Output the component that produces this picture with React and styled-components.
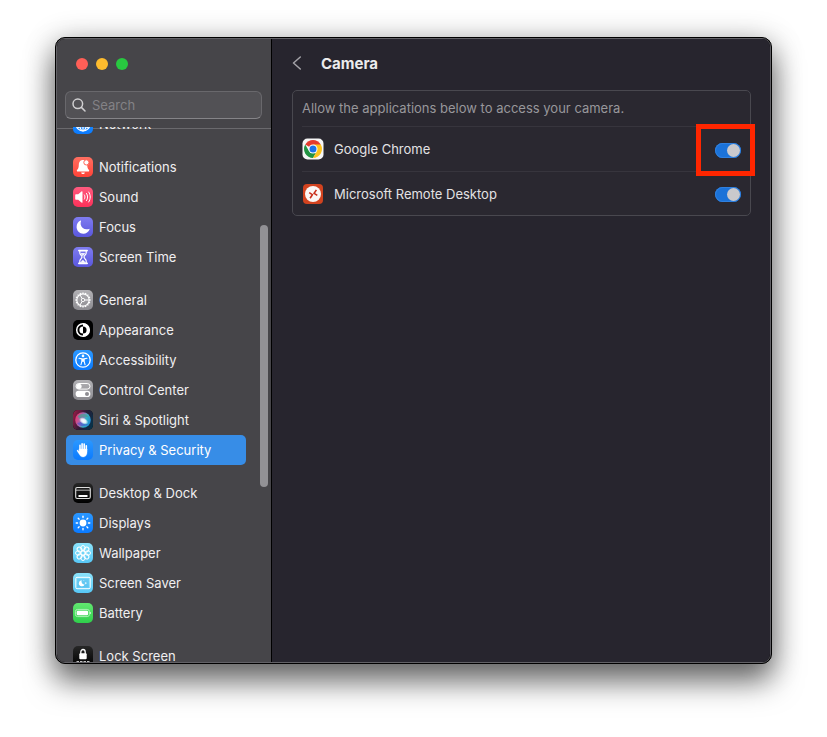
import { useLayoutEffect, useRef } from 'react';
import styled, { createGlobalStyle } from 'styled-components';

const GlobalStyle = createGlobalStyle`
  * {
    box-sizing: border-box;
  }
  body {
    margin: 0;
    background: #fff;
    font-family: Inter, "Liberation Sans", sans-serif;
    font-size: 13px;
  }
`;

const Desktop = styled.div`
  display: flex;
  height: 100vh;
  padding: 37px 55px 73px;
`;

const Window = styled.div`
  flex: 1;
  min-width: 0;
  display: flex;
  border: 1px solid #000;
  border-radius: 10px;
  background: #000;
  box-shadow: 0 18px 30px rgba(0, 0, 0, 0.5), 0 4px 30px rgba(0, 0, 0, 0.3);
`;

const Frame = styled.div`
  flex: 1;
  min-width: 0;
  display: flex;
  border: 1px solid #626166;
  border-radius: 9px;
  overflow: hidden;
`;

const Sidebar = styled.aside`
  width: 215px;
  flex: none;
  display: flex;
  flex-direction: column;
  background: #464549;
  border-right: 1px solid #000;
`;

const SidebarHeader = styled.div`
  padding: 19px 9px 9px 8px;
  border-bottom: 1px solid #6a696d;
`;

const TrafficLights = styled.div`
  display: flex;
  gap: 8px;
  padding-left: 11px;
  margin-bottom: 21px;
`;

const Light = styled.button`
  width: 12px;
  height: 12px;
  padding: 0;
  border: 0;
  border-radius: 50%;
  background: ${(props) => props.$color};
`;

const SearchBox = styled.label`
  display: flex;
  align-items: center;
  gap: 6px;
  height: 28px;
  padding: 0 6px;
  border: 1px solid #69686c;
  border-bottom-color: #858488;
  border-radius: 6px;
  background: #525155;

  svg {
    flex: none;
  }
`;

const SearchInput = styled.input`
  flex: 1;
  min-width: 0;
  padding: 0;
  border: 0;
  outline: 0;
  background: none;
  color: #e6e5e7;
  font: inherit;

  &::placeholder {
    color: #838286;
    opacity: 1;
  }
`;

/* rows slide over the header's hairline before they are clipped */
const ListArea = styled.div`
  position: relative;
  flex: 1;
  min-height: 0;
  margin-top: -2px;
`;

const NavList = styled.nav`
  height: 100%;
  padding: 0 25px 0 9px;
  overflow-y: auto;
  scrollbar-width: none;
`;

const NavGroup = styled.div`
  & + & {
    margin-top: 13px;
  }
`;

const NavItem = styled.a`
  display: flex;
  align-items: center;
  gap: 6px;
  height: 30px;
  padding-left: 7px;
  border-radius: 5px;
  color: ${(props) => (props.$active ? '#fff' : '#f0eff1')};
  background: ${(props) => (props.$active ? '#378de7' : 'none')};
  text-decoration: none;
  white-space: nowrap;
`;

const Tile = styled.span`
  display: block;
  flex: none;
  width: 20px;
  height: 20px;
  border-radius: 5px;
  overflow: hidden;
  background: ${(props) => props.$bg};

  svg {
    display: block;
  }
`;

const ScrollThumb = styled.div`
  position: absolute;
  top: calc(18% + 2px);
  right: 3px;
  width: 8px;
  height: 49%;
  border-radius: 4px;
  background: #929195;
`;

const Main = styled.main`
  flex: 1;
  min-width: 0;
  padding: 13px 19px 0 20px;
  background: #27252e;
`;

const TitleBar = styled.header`
  display: flex;
  align-items: center;
  gap: 19px;
  height: 22px;
  margin-bottom: 16px;
`;

const BackButton = styled.button`
  display: flex;
  padding: 0;
  border: 0;
  background: none;
`;

const Title = styled.h1`
  margin: 0;
  color: #ebebec;
  font-size: 15px;
  font-weight: 700;
`;

const Panel = styled.section`
  padding: 0 9px;
  border: 1px solid #49484f;
  border-radius: 5px;
  background: #2a2830;
`;

const Description = styled.p`
  display: flex;
  align-items: center;
  height: 35px;
  margin: 0;
  padding-bottom: 2px;
  color: #98979b;
`;

const AppRow = styled.div`
  display: flex;
  align-items: center;
  height: 45px;
  border-top: 1px solid #37353d;

  &:last-child {
    height: 44px;
  }
`;

const AppLabel = styled.label`
  flex: 1;
  display: flex;
  align-items: center;
  gap: 10px;
  color: #e3e2e4;
`;

const SwitchHolder = styled.span`
  position: relative;
  display: flex;
  margin-top: 2px;
`;

const Switch = styled.input`
  appearance: none;
  display: flex;
  align-items: center;
  width: 26px;
  height: 15px;
  margin: 0;
  padding: 1px;
  border-radius: 8px;
  background: #55545a;

  &::before {
    content: '';
    width: 13px;
    height: 13px;
    border-radius: 50%;
    background: #cac9cc;
  }

  &:checked {
    justify-content: flex-end;
    background: #1b72d8;
    box-shadow: inset 0 0 0 1px #2f80df;
  }
`;

const Highlight = styled.span`
  position: absolute;
  inset: -19px -14px -18px -19px;
  border: 5px solid #ff2600;
  pointer-events: none;
`;

const blue = 'linear-gradient(#2b98ff, #0a7aff)';
const red = 'linear-gradient(#ff6f61, #ff4338)';
const pink = 'linear-gradient(#ff5b80, #fb3159)';
const indigo = 'linear-gradient(#7f7cf0, #5a57dd)';
const gray = 'linear-gradient(#b2b1b5, #8c8b90)';
const black = 'linear-gradient(#272727, #000)';
const cyan = 'linear-gradient(#8be3fb, #57c6f5)';
const green = 'linear-gradient(#62e770, #2fcf4b)';

const Svg = ({ size = 20, children }) => (
  <svg width={size} height={size} viewBox="0 0 20 20" fill="none" aria-hidden="true">
    {children}
  </svg>
);

const petals = [0, 45, 90, 135, 180, 225, 270, 315];
const teeth = Array.from({ length: 16 }, (_, i) => i * 22.5);

const icons = {
  network: (
    <g stroke="#fff" strokeWidth="1.2">
      <circle cx="10" cy="10" r="7" />
      <ellipse cx="10" cy="10" rx="3.3" ry="7" />
      <path d="M3 10h14M10 3v14M4.4 6.2Q10 9 15.6 6.2M4.4 13.8Q10 11 15.6 13.8" />
    </g>
  ),
  bell: (
    <>
      <path d="M10 3.1C7 3.1 5.9 5.3 5.8 8c-.1 2.6-.6 3.6-1.6 4.8-.7.8-.4 1.8.6 1.8h10.4c1 0 1.3-1 .6-1.8-.9-1.1-1.5-2.2-1.6-4.8C14.1 5.3 13 3.1 10 3.1z" fill="#fff" />
      <path d="M8.2 15.5h3.600c-.1 1-.8 1.600-1.800 1.600s-1.700-.6-1.800-1.600z" fill="#fff" />
      <circle cx="13.4" cy="5.4" r="2.6" fill="#fff" stroke="#ff6458" strokeWidth="1" />
    </>
  ),
  sound: (
    <>
      <path d="M2.2 8c0-.4.3-.7.7-.7h2.300l3.300-2.900c.4-.4 1-.1 1 .4v10.400c0 .5-.6.8-1 .4l-3.300-2.900H2.900c-.4 0-.7-.3-.7-.7V8z" fill="#fff" />
      <path d="M11.4 7.9c.8 1.300.8 2.900 0 4.200M13.5 6.400c1.500 2.200 1.500 5 0 7.200M15.7 5c2.100 3.100 2.100 6.900 0 10" stroke="#fff" strokeWidth="1" strokeLinecap="round" />
    </>
  ),
  moon: (
    <path d="M7.6 3.500c.4-.1.700.2.500.6-.5 1.100-.6 2.300-.4 3.500.6 3 3.400 5 6.500 4.700.6-.1 1.200-.2 1.700-.4.400-.2.800.2.600.6-1 2.500-3.400 4.200-6.200 4.200-3.700 0-6.700-3-6.700-6.700 0-3 1.500-5.600 4-6.500z" fill="#fff" />
  ),
  hourglass: (
    <g stroke="#fff" strokeLinecap="round" strokeLinejoin="round">
      <path d="M5.8 3.600h8.400M5.8 16.400h8.400" strokeWidth="1.6" />
      <path d="M6.8 4v2c0 1.800 2.200 2.500 2.200 4s-2.200 2.200-2.200 4v2M13.2 4v2c0 1.800-2.200 2.500-2.200 4s2.200 2.200 2.200 4v2" strokeWidth="1.2" />
      <path d="M8.3 6.500h3.400L10 8.600zM7.8 15.600h4.400L10 13.300z" fill="#fff" strokeWidth=".7" />
    </g>
  ),
  gear: (
    <g stroke="#fff">
      <circle cx="10" cy="10" r="6.2" strokeWidth="1.2" />
      {teeth.map((a) => (
        <path key={a} d="M10 3.800V2.400" strokeWidth="1.3" transform={`rotate(${a} 10 10)`} />
      ))}
      <circle cx="10" cy="10" r="1.7" strokeWidth=".9" />
      <path d="M11.7 10h4.500M9.1 8.500L6.9 4.700M9.1 11.500l-2.200 3.800" strokeWidth="1" />
    </g>
  ),
  appearance: (
    <>
      <circle cx="10" cy="10" r="6.3" stroke="#fff" strokeWidth="1.5" />
      <path d="M10 6.400a3.600 3.600 0 000 7.200z" fill="#fff" />
      <path d="M10 3.300v3.100a3.600 3.600 0 010 7.200v3.100a6.700 6.700 0 000-13.400z" fill="#fff" />
    </>
  ),
  accessibility: (
    <>
      <circle cx="10" cy="10" r="7.2" stroke="#fff" strokeWidth="1.3" />
      <circle cx="10" cy="5.9" r="1.3" fill="#fff" />
      <path d="M6 8.300l2.900.6v2.200l-1 3.700M14 8.300l-2.900.6v2.200l1 3.700" stroke="#fff" strokeWidth="1.1" strokeLinecap="round" strokeLinejoin="round" />
      <path d="M8.8 8.500h2.400v3.200H8.8z" fill="#fff" />
    </>
  ),
  controls: (
    <>
      <rect x="3" y="3.5" width="14" height="5.6" rx="2.8" stroke="#fff" strokeWidth="1" />
      <circle cx="6" cy="6.3" r="2.6" fill="#fff" />
      <rect x="2.6" y="10.8" width="14.8" height="6.2" rx="3.1" fill="#fff" />
      <circle cx="14" cy="13.9" r="2" fill="#8e8d92" />
    </>
  ),
  siri: (
    <>
      <defs>
        <linearGradient id="siriBack" x1="0" y1="0.3" x2="1" y2=".7">
          <stop offset="0" stopColor="#8c1c45" />
          <stop offset=".5" stopColor="#2b1a35" />
          <stop offset="1" stopColor="#07334a" />
        </linearGradient>
        <linearGradient id="siriOrb" x1="0" y1="0.3" x2="1" y2=".7">
          <stop offset="0" stopColor="#f0346b" />
          <stop offset=".4" stopColor="#a26cb4" />
          <stop offset=".65" stopColor="#35b3c4" />
          <stop offset="1" stopColor="#1c86d8" />
        </linearGradient>
        <radialGradient id="siriGlow">
          <stop offset="0" stopColor="#fff" />
          <stop offset=".5" stopColor="#f2f8ff" stopOpacity=".9" />
          <stop offset="1" stopColor="#fff" stopOpacity="0" />
        </radialGradient>
      </defs>
      <rect width="20" height="20" fill="url(#siriBack)" />
      <circle cx="10" cy="10" r="7.8" fill="url(#siriOrb)" />
      <path d="M4.5 6.500C8 2.500 13 3 16 7.500c-3-1-6-1.500-9 1.500z" fill="#4a9f95" opacity=".75" />
      <path d="M4 13c3 4 8 4 11 1-3 .5-5-.5-6-2z" fill="#4a4fd0" opacity=".6" />
      <ellipse cx="11" cy="10.5" rx="5" ry="3.2" fill="url(#siriGlow)" transform="rotate(30 10 10)" />
    </>
  ),
  hand: (
    <g stroke="#fff" strokeLinecap="round">
      <path d="M7 10V5.300M9.1 9V3.900M11.2 9V4.100M13.3 10V5.700" strokeWidth="1.6" />
      <path d="M6.2 9h7.900v3.100c0 3-1.400 4.900-3.900 4.900-1.900 0-3-.9-3.800-2.500L4.100 11c-.3-.7.5-1.200 1-.7l1.100 1.300z" fill="#fff" strokeWidth=".3" />
    </g>
  ),
  dock: (
    <>
      <rect x="2.7" y="4.5" width="14.6" height="11" rx="1.5" stroke="#dedede" strokeWidth="1.1" />
      <path d="M3 7.200h14" stroke="#dedede" strokeWidth=".8" />
      <path d="M5.5 13h9" stroke="#fff" strokeWidth="2" />
    </>
  ),
  sun: (
    <>
      <circle cx="10" cy="10" r="3.4" fill="#fff" />
      {petals.map((a) => (
        <path key={a} d="M10 4.600V3.200" stroke="#fff" strokeWidth="1.3" strokeLinecap="round" transform={`rotate(${a} 10 10)`} />
      ))}
    </>
  ),
  flower: (
    <g stroke="#fff" strokeWidth="1">
      <circle cx="10" cy="10" r="2.2" />
      {petals.map((a) => (
        <ellipse key={a} cx="10" cy="5.2" rx="2.2" ry="2.7" transform={`rotate(${a} 10 10)`} />
      ))}
    </g>
  ),
  saver: (
    <>
      <rect x="2.8" y="4.3" width="14.4" height="11.4" rx="1.2" stroke="#fff" strokeWidth="1" />
      <rect x="4.3" y="5.8" width="11.4" height="8.4" fill="#4db4e9" opacity=".4" />
      <path d="M8.7 7.300A3 3 0 1011.6 11.400 3 3 0 018.7 7.300z" fill="#fff" />
      <path d="M12.8 8.800l.4.900.9.400-.9.400-.4.900-.4-.9-.9-.4.900-.4zM10.9 6.900l.2.500.5.200-.5.200-.2.500-.2-.5-.5-.2.500-.2z" fill="#fff" />
    </>
  ),
  battery: (
    <>
      <rect x="2.4" y="6.4" width="14" height="7.2" rx="2.2" stroke="#b5f3bd" strokeWidth=".9" />
      <rect x="3.7" y="7.7" width="11.4" height="4.6" rx="1.2" fill="#fff" />
      <path d="M17.2 8.700c1 .4 1 2.200 0 2.600z" fill="#fff" />
    </>
  ),
  lock: (
    <>
      <path d="M7.8 8V5.900c0-3.200 4.400-3.200 4.400 0V8" stroke="#fff" strokeWidth="1.3" />
      <rect x="6.3" y="7.3" width="7.4" height="5.9" rx="1" fill="#fff" />
      <path d="M3.5 16.200h13" stroke="#fff" strokeWidth="2" strokeDasharray="2.500 1" />
    </>
  ),
};

const groups = [
  [{ name: 'Network', icon: 'network', bg: blue }],
  [
    { name: 'Notifications', icon: 'bell', bg: red },
    { name: 'Sound', icon: 'sound', bg: pink },
    { name: 'Focus', icon: 'moon', bg: indigo },
    { name: 'Screen Time', icon: 'hourglass', bg: indigo },
  ],
  [
    { name: 'General', icon: 'gear', bg: gray },
    { name: 'Appearance', icon: 'appearance', bg: '#000' },
    { name: 'Accessibility', icon: 'accessibility', bg: blue },
    { name: 'Control Center', icon: 'controls', bg: gray },
    { name: 'Siri & Spotlight', icon: 'siri', bg: '#000' },
    { name: 'Privacy & Security', icon: 'hand', bg: blue, active: true },
  ],
  [
    { name: 'Desktop & Dock', icon: 'dock', bg: black },
    { name: 'Displays', icon: 'sun', bg: blue },
    { name: 'Wallpaper', icon: 'flower', bg: cyan },
    { name: 'Screen Saver', icon: 'saver', bg: cyan },
    { name: 'Battery', icon: 'battery', bg: green },
  ],
  [{ name: 'Lock Screen', icon: 'lock', bg: black }],
];

const ChromeIcon = () => (
  <svg width="22" height="22" viewBox="0 0 22 22" aria-hidden="true">
    <rect x=".5" y=".5" width="21" height="21" rx="5" fill="#f6f6f6" />
    <path d="M11 11L3.21 6.500A9 9 0 0118.79 6.500z" fill="#e33b2e" />
    <path d="M11 20A9 9 0 013.21 6.500L7.1 13.250 14.9 13.250z" fill="#229342" />
    <path d="M14.9 13.250L11 20a9 9 0 007.790-13.500H11z" fill="#fcc31e" />
    <circle cx="11" cy="11" r="4.5" fill="#fff" />
    <circle cx="11" cy="11" r="3.5" fill="#1a73e8" />
  </svg>
);

const RemoteIcon = () => (
  <svg width="22" height="22" viewBox="0 0 22 22" aria-hidden="true">
    <rect x="1" y="1" width="20" height="20" rx="4" fill="#d2431f" />
    <circle cx="11" cy="11" r="8" fill="#fbf7f5" />
    <path d="M7.2 9.600l3.200 2.100-2.300 3.500M14.4 6.900l-2.300 3.400 3.200 2.100" fill="none" stroke="#c9301c" strokeWidth="1.6" />
  </svg>
);

const apps = [
  { id: 'chrome', name: 'Google Chrome', Icon: ChromeIcon, highlighted: true },
  { id: 'remote-desktop', name: 'Microsoft Remote Desktop', Icon: RemoteIcon },
];

const SettingsSidebar = () => {
  const listRef = useRef(null);

  // the list starts a little scrolled
  useLayoutEffect(() => {
    listRef.current.scrollTop = 18;
  }, []);

  return (
    <Sidebar>
      <SidebarHeader>
        <TrafficLights>
          <Light $color="#ff5f57" aria-label="Close" />
          <Light $color="#febc2e" aria-label="Minimize" />
          <Light $color="#28c840" aria-label="Zoom" />
        </TrafficLights>
        <SearchBox>
          <svg width="14" height="14" viewBox="0 0 14 14" fill="none" stroke="#d0cfd1" strokeWidth="1.5" strokeLinecap="round" aria-hidden="true">
            <circle cx="5.8" cy="5.8" r="4.8" />
            <path d="M9.4 9.400l3.600 3.600" />
          </svg>
          <SearchInput type="text" placeholder="Search" aria-label="Search" />
        </SearchBox>
      </SidebarHeader>
      <ListArea>
        <NavList ref={listRef}>
          {groups.map((group) => (
            <NavGroup key={group[0].name}>
              {group.map((item) => (
                <NavItem key={item.name} href="#" $active={item.active}>
                  <Tile $bg={item.bg}>
                    <Svg>{icons[item.icon]}</Svg>
                  </Tile>
                  {item.name}
                </NavItem>
              ))}
            </NavGroup>
          ))}
        </NavList>
        <ScrollThumb />
      </ListArea>
    </Sidebar>
  );
};

const App = () => {
  return (
    <>
      <GlobalStyle />
      <Desktop>
        <Window>
          <Frame>
            <SettingsSidebar />
            <Main>
              <TitleBar>
                <BackButton aria-label="Back">
                  <svg width="10" height="14" viewBox="0 0 10 14" fill="none" stroke="#a3a2a7" strokeWidth="1.5" strokeLinecap="round" strokeLinejoin="round" aria-hidden="true">
                    <path d="M8.3 1L1.5 7l6.800 6" />
                  </svg>
                </BackButton>
                <Title>Camera</Title>
              </TitleBar>
              <Panel>
                <Description>Allow the applications below to access your camera.</Description>
                {apps.map(({ id, name, Icon, highlighted }) => (
                  <AppRow key={id}>
                    <AppLabel htmlFor={id}>
                      <Icon />
                      {name}
                    </AppLabel>
                    <SwitchHolder>
                      <Switch type="checkbox" id={id} defaultChecked />
                      {highlighted && <Highlight />}
                    </SwitchHolder>
                  </AppRow>
                ))}
              </Panel>
            </Main>
          </Frame>
        </Window>
      </Desktop>
    </>
  );
};

export default App;
